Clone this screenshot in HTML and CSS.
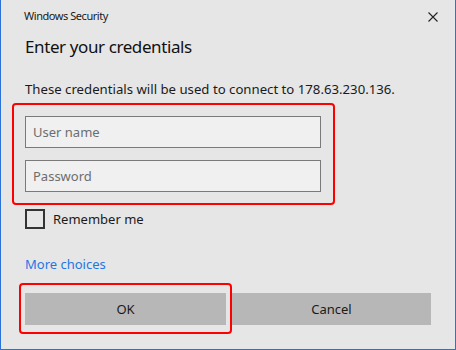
FILE: index.html
```html
<!DOCTYPE html>
<html>
<head>
<meta charset="utf-8">
<link rel="stylesheet" href="styles.css">
</head>
<body>
<div class="window">
  <div class="titlebar">
    <span class="title">Windows Security</span>
    <svg class="close" width="10" height="10" viewBox="0 0 10 10"><path d="M0.5 0.5L9.5 9.5M9.5 0.5L0.5 9.5" stroke="#222" stroke-width="1.1" fill="none"/></svg>
  </div>
  <div class="content">
    <h1 class="heading">Enter your credentials</h1>
    <p class="desc">These credentials will be used to connect to 178.63.230.136.</p>
    <div class="mark fields">
      <div class="input"><span class="ph">User name</span></div>
      <div class="input"><span class="ph">Password</span></div>
    </div>
    <div class="remember">
      <span class="checkbox"></span>
      <span class="label">Remember me</span>
    </div>
    <a class="more">More choices</a>
    <div class="buttons">
      <div class="mark okmark"><div class="btn ok">OK</div></div>
      <div class="btn cancel">Cancel</div>
    </div>
  </div>
</div>
</body>
</html>
```
FILE: styles.css
```css
* { box-sizing: border-box; }
html, body { margin: 0; padding: 0; }
body {
  width: 456px;
  height: 350px;
  font-family: "Noto Sans", "Open Sans", sans-serif;
  color: #1a1a1a;
  background: #e6e6e6;
}
.window {
  width: 456px;
  height: 350px;
  background: #e6e6e6;
  border-left: 1px solid #2a72d6;
  border-right: 1px solid #2a72d6;
  border-bottom: 1px solid #2a72d6;
}
.titlebar {
  height: 35px;
  display: flex;
  align-items: flex-start;
  justify-content: space-between;
  padding: 8px 17px 0 23px;
}
.title {
  font-size: 11px;
  letter-spacing: -0.45px;
  line-height: 16px;
  color: #1a1a1a;
}
.close {
  margin-top: 4px;
}
.content {
  padding-left: 24px;
}
.heading {
  margin: 0;
  font-weight: normal;
  font-size: 17px;
  letter-spacing: -0.4px;
  line-height: 24px;
  color: #111;
}
.desc {
  margin: 20px 0 0 0;
  font-size: 13.2px;
  line-height: 20px;
  color: #1a1a1a;
}
.mark {
  border: 2px solid #ff0000;
  border-radius: 4px;
}
.fields {
  margin-top: 4px;
  margin-left: -13px;
  width: 323px;
  padding: 11px 12px 11px 11px;
  display: flex;
  flex-direction: column;
  gap: 12px;
}
.input {
  height: 32px;
  width: 296px;
  border: 1px solid #7a7a7a;
  background: #f0f0f0;
  display: flex;
  align-items: center;
  padding-left: 7px;
}
.ph {
  font-size: 13px;
  color: #6d6d6d;
}
.remember {
  margin-top: 4px;
  height: 20px;
  display: flex;
  align-items: center;
  gap: 8px;
}
.checkbox {
  width: 20px;
  height: 20px;
  border: 2px solid #333;
}
.label {
  font-size: 13px;
  color: #1a1a1a;
}
.more {
  display: block;
  margin-top: 25px;
  font-size: 13px;
  line-height: 20px;
  color: #1f76e4;
}
.buttons {
  margin-top: 9px;
  display: flex;
  align-items: flex-start;
}
.okmark {
  margin-left: -6px;
  padding: 8px 4px 7px 4px;
}
.btn {
  height: 32px;
  background: #b7b7b7;
  display: flex;
  align-items: center;
  justify-content: center;
  font-size: 13px;
  color: #1a1a1a;
}
.ok { width: 201px; }
.cancel { width: 199px; margin-top: 10px; }
```
